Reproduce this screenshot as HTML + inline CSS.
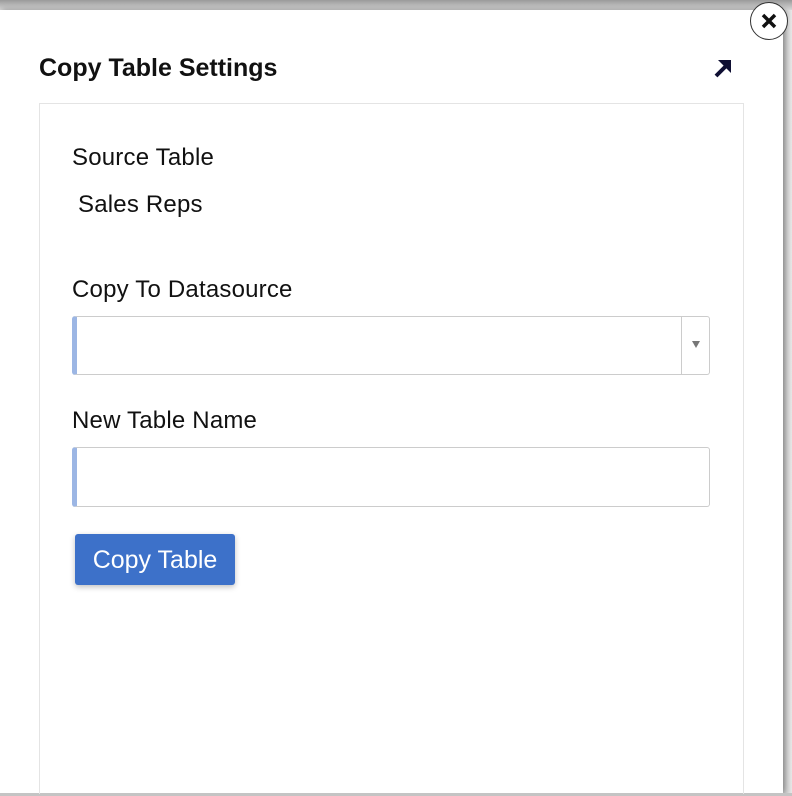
<!DOCTYPE html>
<html><head><meta charset="utf-8"><style>
html,body{margin:0;padding:0;width:792px;height:796px;overflow:hidden;background:#b0b0b0;font-family:"Liberation Sans",sans-serif;position:relative;}
.bg{position:absolute;left:0;top:0;width:792px;height:796px;background:linear-gradient(90deg,#fff 0,#fff 783px,#c8c8c8 783px,#e8e8e8 792px);}
.top{position:absolute;left:0;top:0;width:792px;height:10px;background:linear-gradient(#9a9a9a,#d8d8d8);}
.dlg{position:absolute;left:0;top:10px;width:783px;height:783px;background:#fff;box-shadow:2px 0 6px rgba(0,0,0,.35);}
.bot{position:absolute;left:0;top:793px;width:792px;height:3px;background:#c4c4c4;}
.title{position:absolute;left:39px;top:54px;font-size:25px;font-weight:bold;color:#111;}
.inner{position:absolute;left:39px;top:103px;width:703px;height:690px;border:1px solid #e4e4e4;border-bottom:none;}
.lbl{position:absolute;font-size:24px;letter-spacing:0.2px;color:#111;}
.field{position:absolute;left:72px;width:638px;height:59px;border:1px solid #ccc;border-left:5px solid #9cb6e4;border-radius:3px;box-sizing:border-box;background:#fff;}
.btn{position:absolute;left:75px;top:534px;width:160px;height:51px;background:#3d71c9;color:#fff;font-size:25px;border-radius:3px;text-align:center;line-height:52px;box-shadow:0 2px 6px rgba(0,0,0,.25);}
.close{position:absolute;left:750px;top:2px;width:38px;height:38px;border:1.5px solid #333;border-radius:50%;background:#fff;box-sizing:border-box;}
</style></head><body>
<div class="bg"></div>
<div class="top"></div>
<div class="dlg"></div>
<div class="bot"></div>
<div class="title">Copy Table Settings</div>
<svg style="position:absolute;left:710px;top:55px" width="26" height="26" viewBox="0 0 26 26"><path d="M6 21L18 9" stroke="#0f0f33" stroke-width="4"/><path d="M8 5H21V18Z" fill="#0f0f33"/></svg>
<div class="inner"></div>
<div class="lbl" style="left:72px;top:144px">Source Table</div>
<div class="lbl" style="left:78px;top:191px">Sales Reps</div>
<div class="lbl" style="left:72px;top:276px">Copy To Datasource</div>
<div class="field" style="top:316px"><div style="position:absolute;right:27px;top:0;bottom:0;border-left:1px solid #ccc"></div><div style="position:absolute;right:9px;top:24px;width:0;height:0;border-left:4px solid transparent;border-right:4px solid transparent;border-top:7px solid #777"></div></div>
<div class="lbl" style="left:72px;top:407px">New Table Name</div>
<div class="field" style="top:447px;height:60px"></div>
<div class="btn">Copy Table</div>
<div class="close"><svg style="position:absolute;left:9px;top:9px" width="18" height="18" viewBox="0 0 18 18"><path d="M3 3L15 15M15 3L3 15" stroke="#111" stroke-width="3.5"/></svg></div>
</body></html>
